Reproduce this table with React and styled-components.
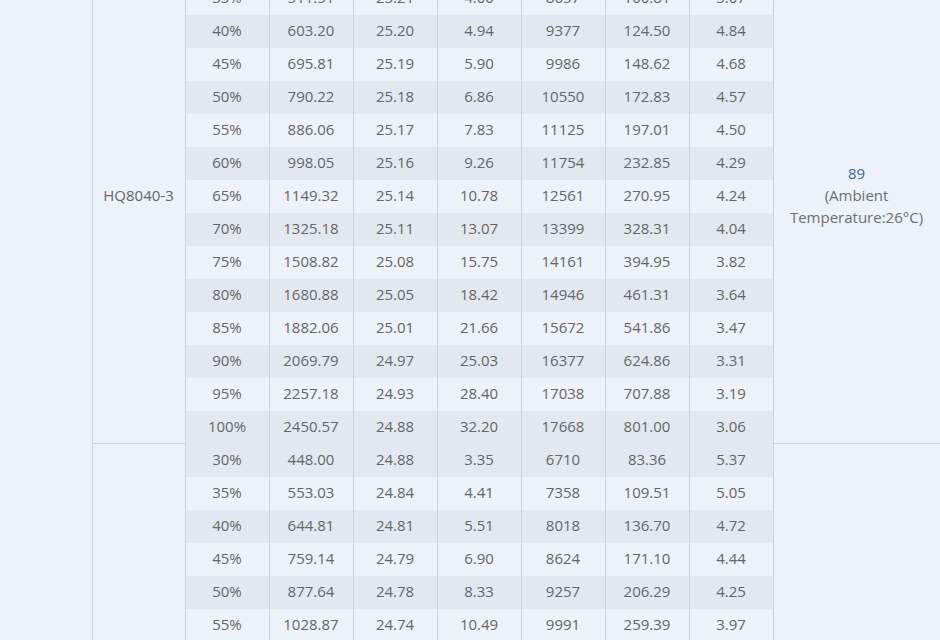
import styled, { createGlobalStyle } from 'styled-components'

const GlobalStyle = createGlobalStyle`
  html, body {
    margin: 0;
    padding: 0;
    background: #edf1f8;
    overflow: hidden;
  }
`

const Page = styled.div`
  margin-top: -52px;
  font-family: "Open Sans", "Liberation Sans", sans-serif;
  font-size: 15px;
  color: #666;
`

const Table = styled.table`
  border-collapse: collapse;
  table-layout: fixed;
  width: 940px;
`

const Col = styled.col`
  width: ${(p) => p.$width}px;
`

const Cell = styled.td`
  height: 31px;
  padding: 0 4px 2px;
  text-align: center;
  vertical-align: middle;
  white-space: nowrap;
  background: ${(p) => (p.$striped ? '#e3e8f0' : 'transparent')};
  border-left: 1px solid #cdd3dd;
  border-right: 1px solid #cdd3dd;
`

const SpanCell = styled.td`
  padding: 0 8px 2px;
  text-align: center;
  vertical-align: middle;
  line-height: 22px;
  border: 1px solid #cdd3dd;
  border-left: ${(p) => (p.$outer ? 'none' : '1px solid #cdd3dd')};
`

const Power = styled.div`
  color: #3a6898;
`

const Note = styled.div`
  color: #6f6f6f;
`

const groups = [
  {
    model: 'HQ8040-3',
    power: '89',
    note: '(Ambient Temperature:26°C)',
    rows: [
      ['30%', '431.26', '25.22', '3.10', '7781', '78.60', '5.40'],
      ['35%', '511.51', '25.21', '4.00', '8657', '100.81', '5.07'],
      ['40%', '603.20', '25.20', '4.94', '9377', '124.50', '4.84'],
      ['45%', '695.81', '25.19', '5.90', '9986', '148.62', '4.68'],
      ['50%', '790.22', '25.18', '6.86', '10550', '172.83', '4.57'],
      ['55%', '886.06', '25.17', '7.83', '11125', '197.01', '4.50'],
      ['60%', '998.05', '25.16', '9.26', '11754', '232.85', '4.29'],
      ['65%', '1149.32', '25.14', '10.78', '12561', '270.95', '4.24'],
      ['70%', '1325.18', '25.11', '13.07', '13399', '328.31', '4.04'],
      ['75%', '1508.82', '25.08', '15.75', '14161', '394.95', '3.82'],
      ['80%', '1680.88', '25.05', '18.42', '14946', '461.31', '3.64'],
      ['85%', '1882.06', '25.01', '21.66', '15672', '541.86', '3.47'],
      ['90%', '2069.79', '24.97', '25.03', '16377', '624.86', '3.31'],
      ['95%', '2257.18', '24.93', '28.40', '17038', '707.88', '3.19'],
      ['100%', '2450.57', '24.88', '32.20', '17668', '801.00', '3.06'],
    ],
  },
  {
    model: 'HQ8040-4',
    power: '92',
    note: '(Ambient Temperature:26°C)',
    rows: [
      ['30%', '448.00', '24.88', '3.35', '6710', '83.36', '5.37'],
      ['35%', '553.03', '24.84', '4.41', '7358', '109.51', '5.05'],
      ['40%', '644.81', '24.81', '5.51', '8018', '136.70', '4.72'],
      ['45%', '759.14', '24.79', '6.90', '8624', '171.10', '4.44'],
      ['50%', '877.64', '24.78', '8.33', '9257', '206.29', '4.25'],
      ['55%', '1028.87', '24.74', '10.49', '9991', '259.39', '3.97'],
      ['60%', '1178.40', '24.70', '12.51', '10720', '309.00', '3.80'],
      ['65%', '1352.66', '24.66', '14.98', '11402', '369.40', '3.66'],
      ['70%', '1531.09', '24.61', '17.73', '12088', '436.31', '3.51'],
      ['75%', '1716.52', '24.57', '20.60', '12760', '506.24', '3.39'],
      ['80%', '1915.37', '24.52', '23.87', '13418', '585.29', '3.27'],
      ['85%', '2120.94', '24.47', '27.35', '14051', '669.21', '3.17'],
      ['90%', '2331.08', '24.41', '31.02', '14660', '757.19', '3.08'],
      ['95%', '2547.76', '24.35', '34.88', '15240', '849.35', '3.00'],
      ['100%', '2768.30', '24.29', '38.90', '15797', '944.82', '2.93'],
    ],
  },
]

const totalRows = groups.reduce((n, g) => n + g.rows.length, 0)

export default function App() {
  return (
    <Page>
      <GlobalStyle />
      <Table>
        <colgroup>
          <Col $width={92} />
          <Col $width={93} />
          {Array.from({ length: 7 }).map((_, i) => (
            <Col key={i} $width={84} />
          ))}
          <Col $width={167} />
        </colgroup>
        <tbody>
          {groups.map((group, gi) =>
            group.rows.map((row, ri) => (
              <tr key={`${gi}-${ri}`}>
                {gi === 0 && ri === 0 && <SpanCell $outer rowSpan={totalRows} />}
                {ri === 0 && <SpanCell rowSpan={group.rows.length}>{group.model}</SpanCell>}
                {row.map((value, ci) => (
                  <Cell key={ci} $striped={ri % 2 === 0}>
                    {value}
                  </Cell>
                ))}
                {ri === 0 && (
                  <SpanCell rowSpan={group.rows.length}>
                    <Power>{group.power}</Power>
                    <Note>{group.note}</Note>
                  </SpanCell>
                )}
              </tr>
            ))
          )}
        </tbody>
      </Table>
    </Page>
  )
}
